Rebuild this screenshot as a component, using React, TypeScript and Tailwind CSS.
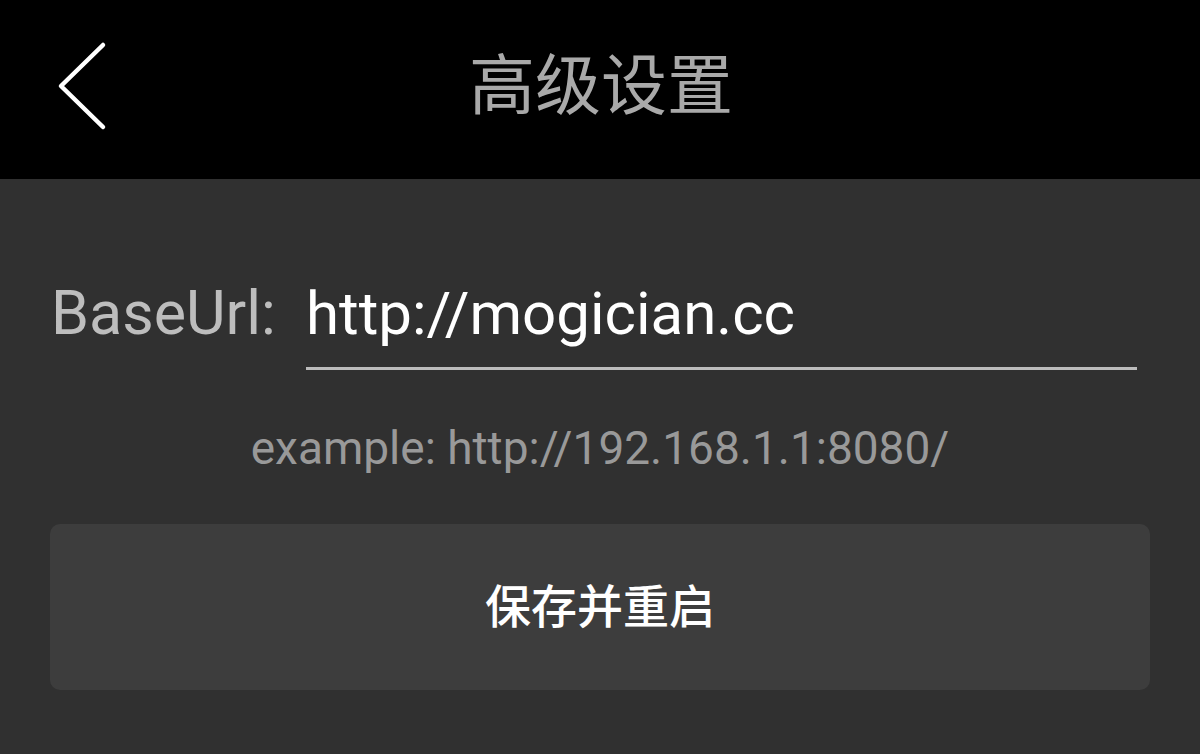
import React from "react";

const font = "font-['Roboto','Noto_Sans_CJK_SC',sans-serif]";

export default function App() {
  return (
    <div className={`w-[1200px] h-[754px] bg-[#303030] flex flex-col ${font}`}>
      {/* Header */}
      <header className="relative h-[179px] bg-black flex items-center justify-center shrink-0">
        <button className="absolute left-[56px] top-[40px] w-[52px] h-[92px] flex items-center justify-center">
          <svg width="52" height="92" viewBox="0 0 52 92" fill="none">
            <path
              d="M47 5 L5 46 L47 87"
              stroke="#ffffff"
              strokeWidth="4.5"
              strokeLinecap="round"
              strokeLinejoin="round"
            />
          </svg>
        </button>
        <h1 className="text-[66px] leading-none text-[#a9a9a9] font-normal -mt-[6px] ml-[2px]">
          高级设置
        </h1>
      </header>

      {/* Form */}
      <div className="flex flex-col px-[50px]">
        <div className="flex items-baseline mt-[98px]">
          <span className="text-[61px] leading-[72px] text-[#bdbdbd] w-[256px] shrink-0 pl-[1px]">
            BaseUrl:
          </span>
          <span className="text-[60px] leading-[72px] text-white">
            http://mogician.cc
          </span>
        </div>
        <div className="mt-[17px] ml-[256px] mr-[13px] h-[3px] bg-[#bcbcbc]" />

        <p className="text-center text-[46px] leading-none text-[#999999] mt-[55px]">
          example: http://192.168.1.1:8080/
        </p>

        <button className="mt-[53px] h-[166px] rounded-[10px] bg-[#3d3d3d] flex items-center justify-center">
          <span className="text-[46px] font-medium text-white">保存并重启</span>
        </button>
      </div>
    </div>
  );
}
